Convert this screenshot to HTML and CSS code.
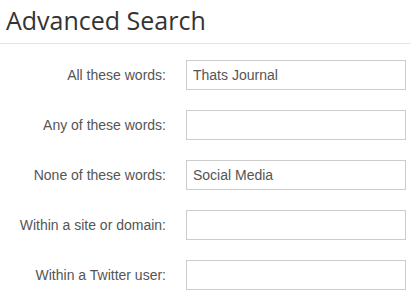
FILE: index.html
```html
<!DOCTYPE html>
<html>
<head>
    <title>Advanced Search</title>
    <link rel="stylesheet" href="styles.css">
</head>
<body>
    <div class="page">
        <h1 class="title">Advanced Search</h1>

        <form class="search-form">
            <div class="form-row">
                <label class="form-label">All these words:</label>
                <input class="form-input" type="text" value="Thats Journal">
            </div>
            <div class="form-row">
                <label class="form-label">Any of these words:</label>
                <input class="form-input" type="text" value="">
            </div>
            <div class="form-row">
                <label class="form-label">None of these words:</label>
                <input class="form-input" type="text" value="Social Media">
            </div>
            <div class="form-row">
                <label class="form-label">Within a site or domain:</label>
                <input class="form-input" type="text" value="">
            </div>
            <div class="form-row">
                <label class="form-label">Within a Twitter user:</label>
                <input class="form-input" type="text" value="">
            </div>
        </form>
    </div>
</body>
</html>
```

FILE: styles.css
```css
body {
    margin: 0;
    padding: 0;
    background: #fff;
    font-family: 'Liberation Sans', Arial, sans-serif;
}
.page {
    width: 411px;
}
.title {
    margin: 0;
    padding: 3px 0 0 6px;
    height: 44px;
    box-sizing: border-box;
    font-family: 'Open Sans', sans-serif;
    font-weight: 500;
    font-size: 25px;
    line-height: 34px;
    color: #333;
    border-bottom: 1px solid #e5e5e5;
}
.search-form {
    padding-top: 16px;
}
.form-row {
    display: flex;
    align-items: center;
    height: 30px;
    margin-bottom: 20px;
}
.form-label {
    width: 166px;
    text-align: right;
    font-size: 14px;
    color: #555;
}
.form-input {
    margin-left: 20px;
    width: 220px;
    height: 30px;
    box-sizing: border-box;
    border: 1px solid #ccc;
    padding: 0 6px;
    font-family: 'Liberation Sans', Arial, sans-serif;
    font-size: 14px;
    color: #555;
    outline: none;
}
```
